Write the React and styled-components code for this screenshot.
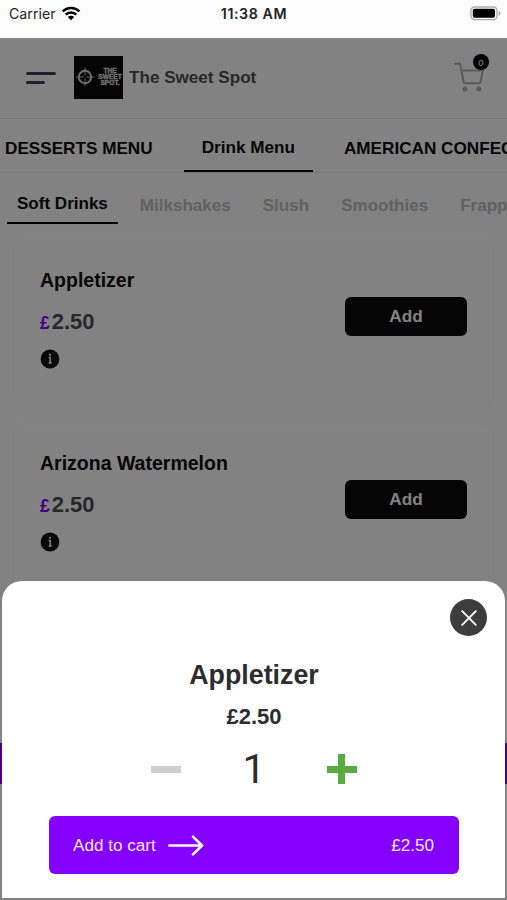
import styled, { createGlobalStyle } from "styled-components";

const categories = ["DESSERTS MENU", "Drink Menu", "AMERICAN CONFECTIONERY"];
const subCategories = ["Soft Drinks", "Milkshakes", "Slush", "Smoothies", "Frappes"];
const products = [
  { name: "Appletizer", price: "2.50" },
  { name: "Arizona Watermelon", price: "2.50" },
];

const WifiIcon = () => (
  <svg width="20" height="15" viewBox="0 0 20 15">
    <g fill="none" stroke="#000" strokeWidth="2.5">
      <path d="M1.6 5.4a12 12 0 0 1 16.8 0" />
      <path d="M4.7 8.7a7.6 7.6 0 0 1 10.6 0" />
    </g>
    <path d="M10 14.2 6.8 11a4.6 4.6 0 0 1 6.4 0z" />
  </svg>
);

const BatteryIcon = () => (
  <svg width="31" height="15" viewBox="0 0 31 15">
    <rect x="1" y="1" width="26" height="12.6" rx="3.6" fill="none" stroke="#a9a9a9" strokeWidth="1.3" />
    <rect x="2.8" y="2.8" width="22.2" height="9" rx="1.8" />
    <path d="M28.6 5v4.8c2.4-.8 2.4-4 0-4.8z" fill="#a9a9a9" />
  </svg>
);

const CartIcon = () => (
  <svg width="30" height="30" viewBox="0 0 30 30" fill="none" stroke="#b0b0b0" strokeWidth="2">
    <path d="M1 1.8h5.3l1 6.7 2.3 11.2q.3 1.5 1.8 1.5h13.4q1.5 0 1.8-1.5l2.3-11.2H7.3" strokeLinejoin="round" strokeLinecap="round" />
    <circle cx="11" cy="27" r="2.5" fill="#b0b0b0" stroke="none" />
    <circle cx="24.8" cy="27" r="2.5" fill="#b0b0b0" stroke="none" />
  </svg>
);

const TargetIcon = () => (
  <svg width="18" height="18" viewBox="0 0 18 18" fill="none" stroke="#dcdcdc">
    <circle cx="9" cy="9" r="6.2" strokeWidth="2" />
    <path d="M9 0v7.6M9 10.4v7.6M0 9h7.6M10.4 9h7.6" strokeWidth="0.9" />
  </svg>
);

const InfoIcon = () => (
  <svg width="20" height="20" viewBox="0 0 20 20">
    <circle cx="10" cy="10" r="9.4" fill="#121212" />
    <path d="M8.7 8.5h1.5v5.2M8.7 13.9h3" fill="none" stroke="#fff" strokeWidth="1.5" />
    <circle cx="10" cy="5.8" r="1.1" fill="#fff" />
  </svg>
);

const CloseIcon = () => (
  <svg width="16" height="16" viewBox="0 0 16 16" stroke="#fff" strokeWidth="1.9" strokeLinecap="round">
    <path d="M1.2 1.2l13.6 13.6M14.8 1.2L1.2 14.8" />
  </svg>
);

const ArrowIcon = () => (
  <svg width="36" height="22" viewBox="0 0 36 22" fill="none" stroke="#fff" strokeWidth="2.6" strokeLinecap="round" strokeLinejoin="round">
    <path d="M1.4 10.5h32.6M25 1.6l9 8.9-9 8.9" />
  </svg>
);

const App = () => {
  return (
    <Screen>
      <GlobalStyle />
      <StatusBar>
        <Carrier>
          Carrier
          <WifiIcon />
        </Carrier>
        <Clock>11:38 AM</Clock>
        <BatteryIcon />
      </StatusBar>
      <Page>
        <Header>
          <MenuButton>
            <span />
            <span />
          </MenuButton>
          <Logo>
            <TargetIcon />
            <LogoText>
              THE
              <br />
              SWEET
              <br />
              SPOT.
            </LogoText>
          </Logo>
          <Title>The Sweet Spot</Title>
          <Cart>
            <CartIcon />
            <Badge>0</Badge>
          </Cart>
        </Header>
        <Tabs>
          {categories.map((name) => (
            <Tab key={name} $active={name === "Drink Menu"}>
              {name}
            </Tab>
          ))}
        </Tabs>
        <SubTabs>
          {subCategories.map((name) => (
            <SubTab key={name} $active={name === "Soft Drinks"}>
              {name}
            </SubTab>
          ))}
        </SubTabs>
        <ProductList>
          {products.map(({ name, price }) => (
            <Card key={name}>
              <div>
                <ProductName>{name}</ProductName>
                <Price>
                  <small>£</small>
                  {price}
                </Price>
                <InfoIcon />
              </div>
              <AddButton>Add</AddButton>
            </Card>
          ))}
        </ProductList>
        <BasketBar />
        <Overlay>
          <Sheet>
            <CloseButton>
              <CloseIcon />
            </CloseButton>
            <SheetTitle>Appletizer</SheetTitle>
            <SheetPrice>£2.50</SheetPrice>
            <Counter>
              <Step $color="#cfcfd1" />
              <Quantity>1</Quantity>
              <Step $color="#58ab41" $plus />
            </Counter>
            <AddToCart>
              <span>Add to cart</span>
              <ArrowIcon />
              <Total>£2.50</Total>
            </AddToCart>
          </Sheet>
        </Overlay>
      </Page>
    </Screen>
  );
};

const GlobalStyle = createGlobalStyle`
  * {
    box-sizing: border-box;
  }
  body {
    margin: 0;
    overflow: hidden;
  }
  svg {
    display: block;
    flex-shrink: 0;
  }
  button {
    border: none;
    padding: 0;
    font-family: inherit;
    cursor: pointer;
  }
`;

const Screen = styled.div`
  display: flex;
  flex-direction: column;
  width: 507px;
  height: 900px;
  overflow: hidden;
  font-family: "Liberation Sans", Arial, sans-serif;
`;

const StatusBar = styled.div`
  display: grid;
  grid-template-columns: 1fr auto 1fr;
  height: 38px;
  padding: 0 6px 11px 9px;
  align-items: center;
  background: #fcfcfc;
  font-family: Inter, sans-serif;
  font-size: 14.2px;
  color: #222;
  > svg {
    justify-self: end;
  }
`;

const Carrier = styled.div`
  display: flex;
  align-items: center;
  gap: 5px;
`;

const Clock = styled.div`
  margin-right: 2px;
  font-weight: 600;
  letter-spacing: 0.6px;
`;

const Page = styled.div`
  position: relative;
  flex: 1;
  overflow: hidden;
  background: #fff;
`;

const Header = styled.div`
  display: flex;
  align-items: center;
  height: 81px;
  padding: 0 23px 2px 26px;
  border-bottom: 1px solid #f0f0f0;
`;

const MenuButton = styled.button`
  display: flex;
  flex-direction: column;
  gap: 6px;
  width: 48px;
  padding-top: 1px;
  background: none;
  span {
    height: 3px;
    width: 30px;
    border-radius: 2px;
    background: #3a3f58;
  }
  span + span {
    width: 19px;
  }
`;

const Logo = styled.div`
  display: flex;
  align-items: center;
  gap: 3px;
  width: 49px;
  height: 43px;
  padding-left: 2px;
  background: #0a0a0a;
  overflow: hidden;
`;

const LogoText = styled.div`
  width: 26px;
  font-size: 6.6px;
  font-weight: 900;
  line-height: 6px;
  text-align: center;
  color: #dcdcdc;
  -webkit-text-stroke: 0.4px #dcdcdc;
`;

const Title = styled.div`
  padding-top: 2px;
  margin-left: 6px;
  font-size: 17.1px;
  font-weight: bold;
  color: #505050;
`;

const Cart = styled.div`
  position: relative;
  margin-left: auto;
`;

const Badge = styled.div`
  position: absolute;
  top: -8px;
  right: -5px;
  width: 16px;
  height: 16px;
  border-radius: 50%;
  background: #000;
  color: #fff;
  font-size: 9.5px;
  line-height: 17px;
  text-align: center;
`;

const Tabs = styled.div`
  display: flex;
  height: 54px;
  padding-left: 5px;
  border-bottom: 1px solid #f0f0f0;
  white-space: nowrap;
`;

const Tab = styled.div`
  height: 53px;
  padding: ${({ $active }) => ($active ? "0 18px 0" : "1px 0 0")};
  margin-right: 31px;
  line-height: 56px;
  font-size: 17.15px;
  font-weight: bold;
  color: #0a0a0a;
  border-bottom: ${({ $active }) => ($active ? "2px solid #000" : "none")};
`;

const SubTabs = styled.div`
  display: flex;
  height: 51px;
  padding-left: 7px;
  white-space: nowrap;
`;

const SubTab = styled.div`
  height: 51px;
  padding: ${({ $active }) => ($active ? "0 10px" : "2px 0 0")};
  margin-right: ${({ $active }) => ($active ? "22px" : "32px")};
  line-height: 62px;
  font-size: 17.05px;
  font-weight: bold;
  color: ${({ $active }) => ($active ? "#0a0a0a" : "#c0c0c0")};
  border-bottom: ${({ $active }) => ($active ? "2px solid #000" : "none")};
`;

const ProductList = styled.div`
  display: flex;
  flex-direction: column;
  gap: 21px;
  padding: 18px 15px;
`;

const Card = styled.div`
  display: flex;
  justify-content: space-between;
  align-items: flex-start;
  height: 162px;
  padding: 26px 25px 0;
  border-radius: 8px;
  background: #fff;
  box-shadow: 0 0 6px rgba(0, 0, 0, 0.03);
`;

const ProductName = styled.div`
  font-size: 19.5px;
  line-height: 24px;
  font-weight: bold;
  color: #0a0a0a;
`;

const Price = styled.div`
  margin: 17px 0 13px;
  font-size: 22px;
  line-height: 26px;
  font-weight: bold;
  color: #505050;
  small {
    margin-right: 2px;
    font-size: 17.5px;
    color: #8400ff;
  }
`;

const AddButton = styled.button`
  width: 122px;
  height: 39px;
  margin-top: 29px;
  border-radius: 6px;
  background: #0a0a0a;
  color: #fff;
  font-size: 17.2px;
  font-weight: bold;
`;

const BasketBar = styled.div`
  position: absolute;
  left: 0;
  right: 0;
  top: 705px;
  height: 41px;
  background: #8400ff;
`;

const Overlay = styled.div`
  position: absolute;
  inset: 0;
  display: flex;
  align-items: flex-end;
  padding: 0 2px 2px;
  background: rgba(0, 0, 0, 0.49);
`;

const Sheet = styled.div`
  display: flex;
  flex-direction: column;
  align-items: center;
  width: 100%;
  height: 317px;
  padding: 18px 17px 0 18px;
  border-radius: 20px 20px 0 0;
  background: #fff;
  color: #2d2d2f;
`;

const CloseButton = styled.button`
  display: flex;
  align-items: center;
  justify-content: center;
  align-self: flex-end;
  width: 37px;
  height: 37px;
  margin-right: 1px;
  border-radius: 50%;
  background: #3d3d3d;
`;

const SheetTitle = styled.div`
  margin-top: 22px;
  font-size: 26.8px;
  line-height: 34px;
  font-weight: bold;
`;

const SheetPrice = styled.div`
  margin-top: 11px;
  font-size: 22px;
  line-height: 28px;
  font-weight: bold;
`;

const Counter = styled.div`
  display: flex;
  align-items: center;
  justify-content: space-between;
  width: 206px;
  height: 50px;
  margin-top: 13px;
`;

const Step = styled.button`
  width: 30px;
  height: 30px;
  background:
    linear-gradient(${(p) => p.$color}, ${(p) => p.$color}) center / 30px 7px no-repeat,
    linear-gradient(${(p) => p.$color}, ${(p) => p.$color}) center / ${(p) => (p.$plus ? "7px 30px" : "0 0")} no-repeat;
`;

const Quantity = styled.div`
  font-family: Roboto, sans-serif;
  font-size: 41px;
  line-height: 50px;
`;

const AddToCart = styled.button`
  display: flex;
  align-items: center;
  gap: 12px;
  width: 410px;
  height: 58px;
  margin-top: 22px;
  padding: 2px 25px 0 24px;
  border-radius: 6px;
  background: #8400ff;
  color: #f6e9ff;
  font-size: 17.1px;
`;

const Total = styled.span`
  margin-left: auto;
`;

export default App;
